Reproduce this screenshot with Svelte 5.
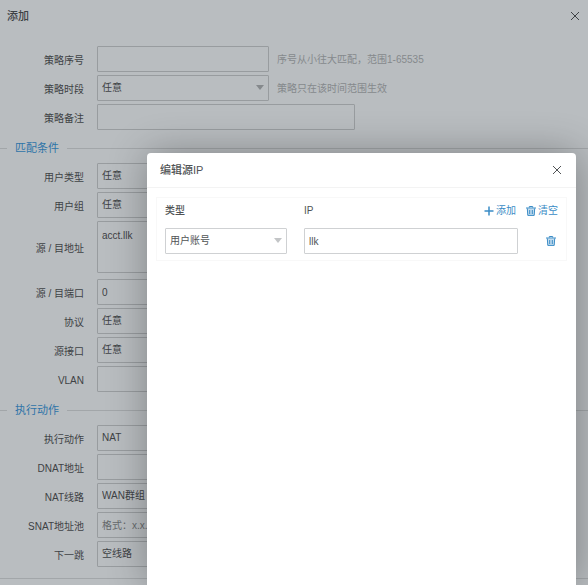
<script>
  const basics = [
    { id: 'order', label: '策略序号', kind: 'text', value: '', hint: '序号从小往大匹配，范围1-65535' },
    { id: 'period', label: '策略时段', kind: 'select', value: '任意', hint: '策略只在该时间范围生效' },
    { id: 'remark', label: '策略备注', kind: 'text', value: '', wide: true }
  ];
  const conditions = [
    { id: 'usertype', label: '用户类型', kind: 'select', value: '任意' },
    { id: 'group', label: '用户组', kind: 'select', value: '任意' },
    { id: 'address', label: '源 / 目地址', kind: 'area', value: 'acct.llk' },
    { id: 'port', label: '源 / 目端口', kind: 'text', value: '0' },
    { id: 'protocol', label: '协议', kind: 'select', value: '任意' },
    { id: 'iface', label: '源接口', kind: 'select', value: '任意' },
    { id: 'vlan', label: 'VLAN', kind: 'text', value: '' }
  ];
  const actions = [
    { id: 'action', label: '执行动作', kind: 'select', value: 'NAT' },
    { id: 'dnat', label: 'DNAT地址', kind: 'text', value: '' },
    { id: 'line', label: 'NAT线路', kind: 'select', value: 'WAN群组' },
    { id: 'snat', label: 'SNAT地址池', kind: 'text', value: '', placeholder: '格式：x.x.x.x-x.x.x.x' },
    { id: 'nexthop', label: '下一跳', kind: 'select', value: '空线路' }
  ];
</script>

{#snippet cross()}
  <svg width="10" height="10" viewBox="0 0 10 10" aria-hidden="true">
    <path d="M1 1L9 9M9 1L1 9" fill="none" stroke="currentColor" stroke-width="1" />
  </svg>
{/snippet}

{#snippet trash()}
  <svg width="10" height="10" viewBox="0 0 10 10" aria-hidden="true">
    <path d="M1.2 2.5H8.8L8.3 9.5H1.7Z" fill="currentColor" fill-opacity="0.3" />
    <path d="M3.3 1.6V.5H6.7V1.6M0 2H10M1.3 2.4L1.8 9.4H8.2L8.7 2.4M3.7 4V8M6.3 4V8" fill="none" stroke="currentColor" stroke-width="1" />
  </svg>
{/snippet}

{#snippet rows(fields)}
  {#each fields as f (f.id)}
    <div class="row" class:tall={f.kind === 'area'}>
      <label for={f.id}>{f.label}</label>
      {#if f.kind === 'select'}
        <span class="pick">
          <select id={f.id}><option>{f.value}</option></select>
        </span>
      {:else if f.kind === 'area'}
        <textarea id={f.id} value={f.value}></textarea>
      {:else}
        <input id={f.id} class:wide={f.wide} type="text" value={f.value} placeholder={f.placeholder ?? ''} />
      {/if}
      {#if f.hint}<span class="hint">{f.hint}</span>{/if}
    </div>
  {/each}
{/snippet}

<div class="page">
  <header class="top">
    <h1>添加</h1>
    <button type="button" aria-label="关闭">{@render cross()}</button>
  </header>
  <form>
    <div class="group">{@render rows(basics)}</div>
    <h2>匹配条件</h2>
    <div class="group">{@render rows(conditions)}</div>
    <h2>执行动作</h2>
    <div class="group">{@render rows(actions)}</div>
  </form>
  <footer></footer>

  <div class="overlay">
    <div class="dialog" role="dialog" aria-modal="true" aria-labelledby="dialog-title">
      <header class="head">
        <h1 id="dialog-title">编辑源IP</h1>
        <button type="button" aria-label="关闭">{@render cross()}</button>
      </header>
      <div class="list">
        <div class="line titles">
          <label class="type" for="type">类型</label>
          <label class="ip" for="ip">IP</label>
          <div class="tools">
            <button type="button">
              <svg width="10" height="10" viewBox="0 0 10 10" aria-hidden="true">
                <path d="M5 .5V9.5M.5 5H9.5" fill="none" stroke="currentColor" stroke-width="1.5" />
              </svg>
              添加
            </button>
            <button type="button">{@render trash()}清空</button>
          </div>
        </div>
        <div class="line">
          <span class="pick type"><select id="type"><option>用户账号</option></select></span>
          <input id="ip" class="ip" type="text" value="llk" />
          <button class="remove" type="button" aria-label="删除">{@render trash()}</button>
        </div>
      </div>
    </div>
  </div>
</div>

<style>
  .page {
    --edge: #989c9f;
    --ink: #3e4245;
    --arrow: #85898c;
    position: relative;
    box-sizing: border-box;
    height: 100vh;
    overflow: hidden;
    background: #b9bdc0;
    color: var(--ink);
    font: 10px/16px "Liberation Sans", "Noto Sans CJK SC", sans-serif;
  }
  h1, h2 { margin: 0; font-weight: 500; }
  h1 { font-size: 11px; }
  button {
    display: flex;
    align-items: center;
    padding: 0;
    border: 0;
    background: none;
    color: inherit;
    font: inherit;
    cursor: pointer;
  }
  svg { display: block; flex: none; }
  .top {
    display: flex;
    align-items: center;
    justify-content: space-between;
    height: 32px;
    padding: 0 8px 0 7px;
    margin-bottom: 14px;
  }
  .group {
    display: flex;
    flex-direction: column;
    gap: 3px;
  }
  .row {
    display: flex;
    align-items: center;
  }
  .row.tall { margin-bottom: 3px; }
  .row label {
    flex: none;
    width: 84px;
    margin-right: 13px;
    padding-top: 4px;
    text-align: right;
  }
  input, select, textarea {
    display: block;
    box-sizing: border-box;
    width: 172px;
    height: 26px;
    margin: 0;
    padding: 0 4px;
    border: 1px solid var(--edge);
    border-radius: 1px;
    outline: 0;
    background: transparent;
    color: inherit;
    font: inherit;
  }
  select { appearance: none; }
  textarea {
    height: 52px;
    padding-top: 6px;
    resize: none;
  }
  input.wide { width: 258px; }
  input::placeholder { color: #66696c; opacity: 1; }
  .pick { position: relative; }
  .pick::after {
    content: "";
    position: absolute;
    top: 10px;
    right: 5px;
    border: 4px solid transparent;
    border-top: 5px solid var(--arrow);
    border-bottom: 0;
    pointer-events: none;
  }
  .hint {
    margin-left: 8px;
    padding-top: 2px;
    color: #85898c;
  }
  h2 {
    display: flex;
    align-items: center;
    gap: 8px;
    box-sizing: border-box;
    height: 33px;
    padding-top: 3px;
    color: #2f74a8;
    font-size: 11px;
    font-weight: 400;
  }
  h2::before, h2::after {
    content: "";
    height: 1px;
    background: #a2a6a9;
  }
  h2::before { width: 7px; }
  h2::after { flex: 1; }
  footer {
    margin-top: 11px;
    border-top: 1px solid #a2a6a9;
  }
  .overlay {
    position: absolute;
    inset: 0;
    display: flex;
    padding: 153px 12px 0 147px;
  }
  .dialog {
    --edge: #cfd1d3;
    --ink: #505355;
    --arrow: #c3c5c7;
    flex: 1;
    border-radius: 4px 4px 0 0;
    background: #fff;
    box-shadow: 1px 1px 40px rgba(0, 0, 0, 0.32);
    color: var(--ink);
  }
  .head {
    display: flex;
    align-items: center;
    justify-content: space-between;
    height: 34px;
    padding: 0 14px 0 13px;
    border-bottom: 1px solid #f3f3f3;
  }
  .list {
    margin: 9px 9px 0;
    padding: 0 8px 6px;
    border: 1px solid #f8f8f8;
  }
  .line {
    display: flex;
    align-items: center;
  }
  .titles {
    box-sizing: border-box;
    height: 30px;
    padding-bottom: 4px;
    font-weight: 500;
  }
  .line .type {
    flex: none;
    width: 122px;
    margin-right: 17px;
  }
  .line select { width: 100%; }
  .line .ip {
    flex: 1;
    min-width: 0;
  }
  .tools {
    display: flex;
    gap: 10px;
    color: #3a8cc6;
  }
  .tools button { gap: 2px; font-weight: 400; }
  .remove {
    margin: 0 2px 0 28px;
    color: #3a8cc6;
  }
</style>
